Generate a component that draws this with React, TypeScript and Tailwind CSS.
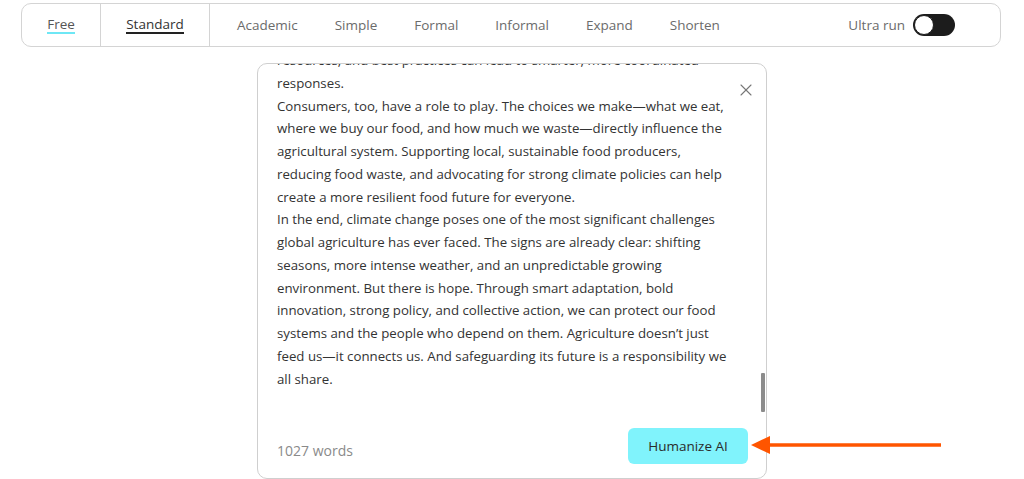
import { X } from 'lucide-react';

const tabs = ['Academic', 'Simple', 'Formal', 'Informal', 'Expand', 'Shorten'];

const paragraphs = [
    'resources, and best practices can lead to smarter, more coordinated responses.',
    'Consumers, too, have a role to play. The choices we make\u2014what we eat, where we buy our food, and how much we waste\u2014directly influence the agricultural system. Supporting local, sustainable food producers, reducing food waste, and advocating for strong climate policies can help create a more resilient food future for everyone.',
    'In the end, climate change poses one of the most significant challenges global agriculture has ever faced. The signs are already clear: shifting seasons, more intense weather, and an unpredictable growing environment. But there is hope. Through smart adaptation, bold innovation, strong policy, and collective action, we can protect our food systems and the people who depend on them. Agriculture doesn\u2019t just feed us\u2014it connects us. And safeguarding its future is a responsibility we all share.',
];

export default function App() {
    return (
        <div className="relative h-[479px] w-[1024px] overflow-hidden bg-white pt-[3px] font-['Open_Sans',sans-serif]">
            {/* Mode bar */}
            <div className="mx-[21px] flex h-[44px] w-[980px] items-center rounded-[10px] border border-[#d4d4d4] text-[13.5px] text-[#6b6b6b]">
                <div className="flex h-full w-[79px] items-center justify-center border-r border-[#d4d4d4]">
                    <span className="border-b-2 border-[#6ee7f5] leading-[16px] text-[#555]">Free</span>
                </div>
                <div className="flex h-full w-[109px] items-center justify-center border-r border-[#d4d4d4]">
                    <span className="border-b-2 border-[#222] leading-[16px] text-[#333]">Standard</span>
                </div>
                <div className="flex items-center gap-[37px] pl-[27px]">
                    {tabs.map(t => (
                        <span key={t}>{t}</span>
                    ))}
                </div>
                <div className="ml-auto flex items-center gap-[8px] pr-[45px]">
                    <span>Ultra run</span>
                    <div className="flex h-[22px] w-[42px] items-center rounded-full bg-[#1c1c1c] p-[1px]">
                        <div className="h-[20px] w-[20px] rounded-full border border-[#1c1c1c] bg-white" />
                    </div>
                </div>
            </div>

            {/* Editor card */}
            <div className="relative mx-auto mt-[16px] flex h-[416px] w-[510px] flex-col rounded-[10px] border border-[#cfcfcf]">
                <div className="h-[352px] overflow-hidden">
                    <div className="mt-[-15px] w-[471px] pl-[19px] text-[13.25px] leading-[22.75px] text-[#333]">
                        {paragraphs.map((p, i) => (
                            <p key={i}>{p}</p>
                        ))}
                    </div>
                </div>
                <div className="flex flex-1 items-center justify-between pl-[19px] pr-[18px] pb-[2px]">
                    <span className="pt-[8px] text-[14px] text-[#8a8a8a]">1027 words</span>
                    <button className="h-[36px] w-[120px] rounded-[6px] bg-[#80f3fc] text-[13.5px] text-[#2b2b2b]">
                        Humanize AI
                    </button>
                </div>

                {/* Close */}
                <X className="absolute right-[10px] top-[16px] h-[20px] w-[20px] text-[#777]" strokeWidth={1.3} />

                {/* Scrollbar thumb */}
                <div className="absolute right-[1px] top-[309px] h-[39px] w-[4px] rounded-[1px] bg-[#8c8c8c]" />
            </div>

            {/* Annotation arrow */}
            <svg className="absolute left-[750px] top-[433px]" width="195" height="24" viewBox="0 0 195 24">
                <line x1="16" y1="12" x2="191" y2="12" stroke="#ff5500" strokeWidth="3.5" />
                <polygon points="1,12 20,3 20,21" fill="#ff5500" />
            </svg>
        </div>
    );
}
